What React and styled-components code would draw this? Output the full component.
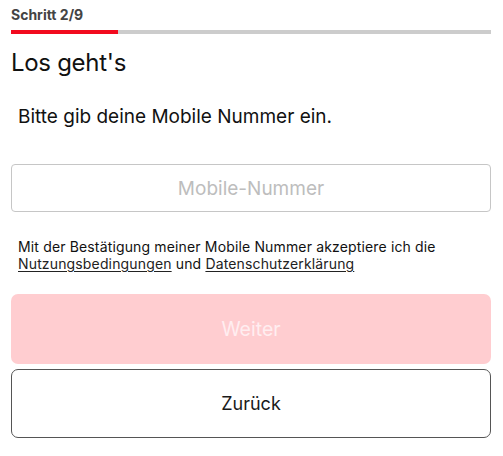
import React, { useState } from 'react';
import styled, { createGlobalStyle } from 'styled-components';

const GlobalStyle = createGlobalStyle`
  html, body {
    margin: 0;
    padding: 0;
    background: #ffffff;
  }
  body {
    font-family: Inter, "Noto Sans", "Liberation Sans", sans-serif;
    color: #111111;
  }
  * {
    box-sizing: border-box;
  }
`;

const Page = styled.div`
  display: flex;
  flex-direction: column;
  padding: 6px 12px 0 11px;
`;

const StepLabel = styled.div`
  font-size: 14px;
  line-height: 17px;
  font-weight: 700;
  color: #444444;
`;

const Progress = styled.div`
  margin-top: 7px;
  height: 4px;
  background: #cccccc;
`;

const ProgressFill = styled.div`
  height: 100%;
  background: #f20a1e;
`;

const Heading = styled.h1`
  margin: 13px 0 0;
  font-size: 24px;
  line-height: 32px;
  font-weight: 400;
  letter-spacing: -0.3px;
  color: #111111;
`;

const Prompt = styled.p`
  margin: 27px 0 0;
  padding-left: 7px;
  font-size: 19px;
  line-height: 22px;
  color: #111111;
`;

const PhoneInput = styled.input`
  margin-top: 36px;
  width: 100%;
  height: 48px;
  border: 1px solid #c6c6c6;
  border-radius: 4px;
  font-family: inherit;
  font-size: 19px;
  text-align: center;
  color: #111111;
  outline: none;

  &::placeholder {
    color: #bdbdbd;
  }
`;

const Terms = styled.p`
  margin: 26px 0 0;
  padding-left: 7px;
  font-size: 14px;
  line-height: 17px;
  letter-spacing: 0.15px;
  color: #111111;

  a {
    color: #222222;
    text-decoration: underline;
    text-underline-offset: 2px;
  }
`;

const Button = styled.button`
  width: 100%;
  height: ${(p) => (p.$primary ? '70px' : '69px')};
  margin-top: ${(p) => (p.$primary ? '22px' : '5px')};
  border-radius: 7px;
  font-family: inherit;
  font-size: ${(p) => (p.$primary ? '19.5px' : '18px')};
  background: ${(p) => (p.$primary ? '#ffcdd0' : '#ffffff')};
  color: ${(p) => (p.$primary ? '#ffeef0' : '#1a1a1a')};
  border: ${(p) => (p.$primary ? 'none' : '1.5px solid #555555')};
  cursor: pointer;
`;

export default function App() {
  const [phone, setPhone] = useState('');
  const step = 2;
  const total = 9;

  return (
    <>
      <GlobalStyle />
      <Page>
        <StepLabel>
          Schritt {step}/{total}
        </StepLabel>
        <Progress>
          <ProgressFill style={{ width: `${(step / total) * 100}%` }} />
        </Progress>
        <Heading>Los geht's</Heading>
        <Prompt>Bitte gib deine Mobile Nummer ein.</Prompt>
        <PhoneInput
          type="tel"
          placeholder="Mobile-Nummer"
          value={phone}
          onChange={(e) => setPhone(e.target.value)}
        />
        <Terms>
          Mit der Bestätigung meiner Mobile Nummer akzeptiere ich die{' '}
          <a href="#">Nutzungsbedingungen</a> und{' '}
          <a href="#">Datenschutzerklärung</a>
        </Terms>
        <Button $primary disabled={!phone}>
          Weiter
        </Button>
        <Button>Zurück</Button>
      </Page>
    </>
  );
}
